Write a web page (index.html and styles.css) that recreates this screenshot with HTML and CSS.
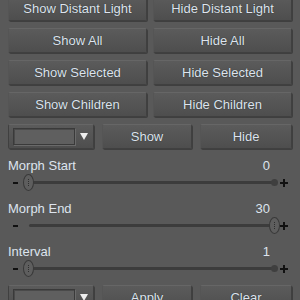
FILE: index.html
```html
<!DOCTYPE html>
<html lang="en">
<head>
    <meta charset="UTF-8">
    <title>Visibility Panel</title>
    <link rel="stylesheet" href="styles.css">
</head>
<body>
    <div class="panel">
        <div class="btn-grid">
            <button class="btn">Show Distant Light</button>
            <button class="btn">Hide Distant Light</button>
            <button class="btn">Show All</button>
            <button class="btn">Hide All</button>
            <button class="btn">Show Selected</button>
            <button class="btn">Hide Selected</button>
            <button class="btn">Show Children</button>
            <button class="btn">Hide Children</button>
        </div>

        <div class="tool-row">
            <div class="combo">
                <div class="combo-field"></div>
                <span class="combo-arrow"></span>
            </div>
            <button class="btn">Show</button>
            <button class="btn">Hide</button>
        </div>

        <div class="slider-block">
            <div class="slider-head"><span>Morph Start</span><span class="val">0</span></div>
            <div class="slider">
                <span class="minus"></span>
                <div class="track"><span class="thumb" style="left: 0%"></span></div>
                <span class="plus"></span>
            </div>
        </div>

        <div class="slider-block">
            <div class="slider-head"><span>Morph End</span><span class="val">30</span></div>
            <div class="slider">
                <span class="minus"></span>
                <div class="track"><span class="thumb" style="left: 100%"></span></div>
                <span class="plus"></span>
            </div>
        </div>

        <div class="slider-block">
            <div class="slider-head"><span>Interval</span><span class="val">1</span></div>
            <div class="slider">
                <span class="minus"></span>
                <div class="track"><span class="thumb" style="left: 0%"></span></div>
                <span class="plus"></span>
            </div>
        </div>

        <div class="tool-row">
            <div class="combo">
                <div class="combo-field"></div>
                <span class="combo-arrow"></span>
            </div>
            <button class="btn">Apply</button>
            <button class="btn">Clear</button>
        </div>
    </div>
</body>
</html>
```

FILE: styles.css
```css
body {
    margin: 0;
    background: #595959;
    font-family: "Liberation Sans", Arial, sans-serif;
    font-size: 13px;
    color: #dde4ee;
    overflow: hidden;
}
.panel {
    padding: 0 8px;
    margin-top: -4px;
}
.btn-grid {
    display: grid;
    grid-template-columns: 1fr 1fr;
    column-gap: 6px;
    row-gap: 7px;
}
.btn {
    height: 25px;
    padding: 0;
    font: inherit;
    color: #dde4ee;
    text-shadow: 0 0 1px rgba(0, 0, 0, 0.6);
    background: linear-gradient(#5b5b5b, #4e4e4e);
    border: 1px solid #404040;
    border-top-color: #666;
    border-left-color: #555;
    border-radius: 2px;
    box-shadow: 1px 1px 0 #3f3f3f;
}
.tool-row {
    display: grid;
    grid-template-columns: 86px 90px 92px;
    column-gap: 8px;
    margin-top: 7px;
}
.combo {
    height: 25px;
    box-sizing: border-box;
    display: flex;
    align-items: center;
    padding: 0 4px;
    background: linear-gradient(#5b5b5b, #4e4e4e);
    border: 1px solid #404040;
    border-top-color: #666;
    border-radius: 2px;
    box-shadow: 1px 1px 0 #3f3f3f;
}
.combo-field {
    width: 60px;
    height: 15px;
    background: #5f5f5f;
    border: 1px solid #3a3a3a;
    box-shadow: inset 1px 1px 0 #4a4a4a, 1px 1px 0 #6a6a6a;
}
.combo-arrow {
    margin-left: 5px;
    width: 0;
    height: 0;
    border-left: 4px solid transparent;
    border-right: 4px solid transparent;
    border-top: 7px solid #eeeeee;
}
.slider-block {
    margin-top: 9px;
}
.slider-head {
    display: flex;
    justify-content: space-between;
    padding-right: 22px;
    height: 15px;
    line-height: 15px;
}
.slider {
    display: flex;
    align-items: center;
    height: 19px;
    padding-right: 4px;
}
.minus {
    width: 5px;
    height: 2px;
    background: #111;
    margin: 0 3px 0 5px;
}
.track {
    flex: 1;
    height: 3px;
    background: #3c3c3c;
    border-radius: 2px;
    position: relative;
    margin: 0 5px 0 8px;
}
.track::after {
    content: "";
    position: absolute;
    right: -3px;
    top: -2px;
    width: 7px;
    height: 7px;
    border-radius: 50%;
    background: #3f3f3f;
}
.thumb {
    position: absolute;
    z-index: 1;
    top: -7px;
    width: 9px;
    height: 15px;
    margin-left: -6px;
    background: #5e5e5e;
    border: 1px solid #383838;
    border-radius: 50%;
}
.thumb::after {
    content: "";
    position: absolute;
    left: 4px;
    top: 4px;
    height: 7px;
    border-left: 1px dotted #2e2e2e;
}
.plus {
    position: relative;
    width: 8px;
    height: 8px;
}
.plus::before,
.plus::after {
    content: "";
    position: absolute;
    background: #111;
}
.plus::before {
    left: 0;
    top: 3px;
    width: 8px;
    height: 2px;
}
.plus::after {
    left: 3px;
    top: 0;
    width: 2px;
    height: 8px;
}
```
